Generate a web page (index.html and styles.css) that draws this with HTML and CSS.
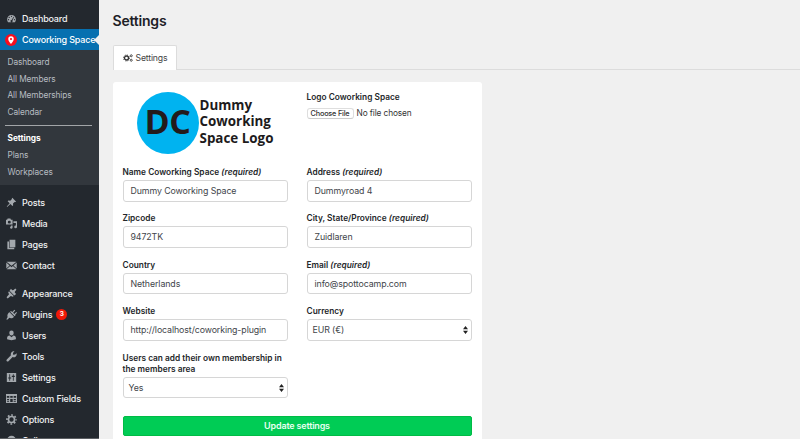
FILE: index.html
```html
<!DOCTYPE html>
<html lang="en">
<head>
<meta charset="utf-8">
<title>Settings</title>
<link rel="stylesheet" href="styles.css">
</head>
<body>
<div class="app">
<nav class="sidebar">
  <a class="item"><svg viewBox="0 0 20 20"><path fill-rule="evenodd" d="M3.800 17h12.400c1.100-1.500 1.800-3.400 1.800-5.400A8 8 0 0 0 2 11.600c0 2 .7 3.900 1.800 5.400zM10 5a1 1 0 1 1 0 2.200A1 1 0 0 1 10 5zM5.800 7a1 1 0 1 1 0 2.200A1 1 0 0 1 5.800 7zm8 0 1 .4-3 6a2 2 0 1 1-1.500-.8zM4.600 11a1 1 0 1 1 0 2.200 1 1 0 0 1 0-2.200zm10.800 0a1 1 0 1 1 0 2.200 1 1 0 0 1 0-2.200z"/></svg><span>Dashboard</span></a>
  <a class="item current"><svg class="pin" viewBox="0 0 24 24"><circle cx="12" cy="12" r="12" fill="#f80d1d"/><path fill="#fff" fill-rule="evenodd" d="M12 4.500a5.500 5.500 0 0 0-5.500 5.500c0 4 5.500 10 5.500 10s5.500-6 5.500-10A5.500 5.500 0 0 0 12 4.500zm0 3.300a2.200 2.200 0 1 1 0 4.400 2.200 2.200 0 0 1 0-4.400z"/></svg><span>Coworking Space</span></a>
  <div class="submenu">
    <a>Dashboard</a><a>All Members</a><a>All Memberships</a><a>Calendar</a>
    <hr>
    <a class="active">Settings</a><a>Plans</a><a>Workplaces</a>
  </div>
  <div class="group">
  <a class="item"><svg viewBox="0 0 20 20"><path d="M11.500 1.500 18.500 8.500l-1.600.7-1.200-.3-3 3 .3 3.300-1.300 1.300-3.600-3.600L2 18l-.6-.6 5.300-6L3 7.700l1.300-1.300 3.500.4 3-3-.2-1.200z"/></svg><span>Posts</span></a>
  <a class="item"><svg viewBox="0 0 20 20"><path fill-rule="evenodd" d="M0 3h2l1-2h5l1 2h3v9H0zm6 1.800a2.700 2.700 0 1 0 0 5.400 2.700 2.700 0 0 0 0-5.400zM13.500 6H20v10a2.500 2.500 0 1 1-2-2.400V9h-4.500zM9 13.500h3V17a2.300 2.300 0 1 1-3-2z"/></svg><span>Media</span></a>
  <a class="item"><svg viewBox="0 0 20 20"><path d="M6.500 1.500H17V15H6.500zM2.500 4.500h3V16H15v2.500H2.500z"/></svg><span>Pages</span></a>
  <a class="item"><svg viewBox="0 0 20 20"><path d="M1 3h18l-9 7.500zM.5 4.500l6 5.500-6 5.500zm19 0v11l-6-5.500zM7.500 11 10 13l2.500-2 6.500 6H1z"/></svg><span>Contact</span></a>
  </div>
  <div class="group">
  <a class="item"><svg viewBox="0 0 20 20"><path d="M9 1.500 11.500 4l2.200-.3L17 1l2 2-2.700 3.500-.3 2L18.500 11 15 13.500 6.500 5zM5.500 6l8.500 8.500-1.500 1.500-3.800-1.500L3 19l-2-2 4.500-5.500L4 7.500z"/></svg><span>Appearance</span></a>
  <a class="item"><svg viewBox="0 0 20 20"><path d="m11.500 5.500 3.700-4.200 1.600 1.500L13 7l2 2 3.700-3.700 1.500 1.500-3.700 4 .8 1-1.500 1.500L7.500 5 9 3.500zM6.500 6l8 8c-2 3-6 3.500-8.500 2L3 19H.5L3 14.500C1.500 11.500 3.500 7.500 6.500 6z"/></svg><span>Plugins</span><b class="badge">3</b></a>
  <a class="item"><svg viewBox="0 0 20 20"><path d="M10 1a4 4 0 0 1 4 4c0 2.500-1.500 5-4 5S6 7.500 6 5a4 4 0 0 1 4-4zm-3.500 9 3.500 3 3.500-3c2.800.5 4.500 2 4.500 4.500V17c-2 1-5 1.500-8 1.500S4 18 2 17v-2.500C2 12 3.700 10.500 6.500 10z"/></svg><span>Users</span></a>
  <a class="item"><svg viewBox="0 0 20 20"><path d="M16.700 6.300 13.500 7l-1-1 .7-3.200L15.500.8A5.300 5.300 0 0 0 9 7.700L1.500 15.500a2 2 0 0 0 3 3L12 11a5.300 5.300 0 0 0 7-6.800z"/></svg><span>Tools</span></a>
  <a class="item"><svg viewBox="0 0 20 20"><path fill-rule="evenodd" d="M1.500 2h17v16h-17zM6 4v6H4v2h2v4h1.500v-4h2v-2h-2V4zm6.500 0v3h-2v2h2v7H14V9h2V7h-2V4z"/></svg><span>Settings</span></a>
  <a class="item"><svg viewBox="0 0 20 20"><path fill-rule="evenodd" d="M0 2h20v16H0zM1.500 5.500v3h4.500v-3zm6.200 0v3h4.500v-3zm6.200 0v3h4.500v-3zM2 11v2h3.500v-2zm0 4v1.500h3.500V15zm5.700-4v5.500h4.500V11zm6.200 0v2h4v-2zm0 4v1.500h4V15z"/></svg><span>Custom Fields</span></a>
  <a class="item"><svg viewBox="0 0 20 20"><g fill="none" stroke="#a3a8ad"><circle cx="10" cy="10" r="5.500" stroke-width="3"/><circle cx="10" cy="10" r="8.200" stroke-width="3" stroke-dasharray="3.220 3.220" stroke-dashoffset="1.610"/></g></svg><span>Options</span></a>
  <a class="item"><svg viewBox="0 0 20 20"><circle cx="10" cy="10" r="8.500"/></svg><span>Gallery</span></a>
  </div>
</nav>
<main>
  <h1>Settings</h1>
  <div class="tabs"><a class="tab"><svg viewBox="0 0 20 16" fill="none" stroke="#333"><circle cx="7" cy="8" r="4" stroke-width="2.600"/><circle cx="7" cy="8" r="6" stroke-width="1.800" stroke-dasharray="2.400 2.300"/><circle cx="16.500" cy="3.500" r="2" stroke-width="1.700"/><circle cx="16.500" cy="12.500" r="2" stroke-width="1.700"/></svg><span>Settings</span></a></div>
  <form class="card">
    <div class="logo"><div class="disc">DC</div><div class="logo-name">Dummy<br>Coworking<br>Space Logo</div></div>
    <div class="upload"><label>Logo Coworking Space</label><div class="file"><span class="choose">Choose File</span><span class="nofile">No file chosen</span></div></div>
    <div class="field"><label>Name Coworking Space <i>(required)</i></label><div class="input">Dummy Coworking Space</div></div>
    <div class="field"><label>Address <i>(required)</i></label><div class="input">Dummyroad 4</div></div>
    <div class="field"><label>Zipcode</label><div class="input">9472TK</div></div>
    <div class="field"><label>City, State/Province <i>(required)</i></label><div class="input">Zuidlaren</div></div>
    <div class="field"><label>Country</label><div class="input">Netherlands</div></div>
    <div class="field"><label>Email <i>(required)</i></label><div class="input">info@spottocamp.com</div></div>
    <div class="field"><label>Website</label><div class="input">http://localhost/coworking-plugin</div></div>
    <div class="field"><label>Currency</label><div class="input select">EUR (€)<svg viewBox="0 0 5 8"><path d="M0 3.200 2.500 0 5 3.200zM0 4.800 2.500 8 5 4.800z"/></svg></div></div>
    <div class="field tall"><label>Users can add their own membership in<br>the members area</label><div class="input select">Yes<svg viewBox="0 0 5 8"><path d="M0 3.200 2.500 0 5 3.200zM0 4.800 2.500 8 5 4.800z"/></svg></div></div>
    <div class="submit">Update settings</div>
  </form>
</main>
</div>
</body>
</html>
```
FILE: styles.css
```css
* { box-sizing: border-box; }
body { margin: 0; background: #f0f0f0; font-family: Inter, "Liberation Sans", sans-serif; color: #333; overflow: hidden; }
.app { display: flex; width: 800px; height: 439px; overflow: hidden; }
.sidebar { width: 99px; height: 439px; flex: none; background: #23282e; padding-top: 8px; overflow: hidden; border-bottom: 1px solid #5c5f63; }
.item { display: flex; align-items: center; height: 21px; padding-left: 6px; color: #f0f1f2; font-size: 9px; font-weight: 500; letter-spacing: -.18px; white-space: nowrap; position: relative; }
.item svg { width: 11px; height: 11px; margin-right: 5px; fill: #a3a8ad; flex: none; }
.item .pin { width: 12px; height: 12px; margin: 0 5px 0 -1px; }
.current { background: #0670b0; color: #fff; }
.current::after { content: ""; position: absolute; right: 0; top: 5.500px; border: 5px solid transparent; border-right-color: #f0f0f0; border-left: 0; }
.submenu { height: 135px; background: #32373d; padding: 4px 7.500px 0; }
.submenu a { display: block; height: 16.700px; line-height: 17.200px; font-size: 8.300px; letter-spacing: -.1px; color: #b8bdc2; }
.submenu hr { border: 0; height: 1px; background: #a2a5a8; margin: 4px 0 4.500px -3px; }
.submenu .active { color: #fff; font-weight: 700; letter-spacing: -.05px; }
.group { padding-top: 7px; }
.badge { width: 11px; height: 11px; border-radius: 50%; background: #f01808; color: #fff; font-size: 6.500px; line-height: 11px; text-align: center; letter-spacing: 0; margin-left: 4px; }
main { flex: 1; min-width: 0; padding-left: 13.500px; }
h1 { margin: 0; padding-top: 12px; height: 45px; font-size: 14px; line-height: 18px; font-weight: 600; letter-spacing: -.2px; color: #1d2126; }
.tabs { height: 25px; border-bottom: 1px solid #dcdcdc; }
.tab { display: flex; align-items: center; width: 64px; height: 25px; background: #fff; border: 1px solid #dcdcdc; border-bottom: 0; border-radius: 2px 2px 0 0; font-size: 8.700px; letter-spacing: -.18px; padding-left: 9px; color: #444; }
.tab svg { width: 10px; height: 8px; margin-right: 3px; }
.card { width: 369px; height: 370px; margin-top: 12px; padding: 10px 10px 0; background: #fff; border-radius: 3px; display: grid; grid-template-columns: 165px 165px; column-gap: 19px; grid-template-rows: 74px repeat(4, 46.400px) 64px 20px; }
.logo { display: flex; padding-left: 14px; }
.disc { width: 62px; height: 62px; flex: none; border-radius: 50%; background: #00b3f0; color: #231a1c; font: 700 34px/59px "Open Sans", sans-serif; letter-spacing: -.3px; text-align: center; }
.logo-name { font: 700 13.400px/16.300px "Open Sans", sans-serif; color: #1d1b1c; padding-top: 5px; margin-left: 1px; white-space: nowrap; }
label { display: block; font-size: 8.300px; line-height: 11px; height: 11px; padding-top: 1px; font-weight: 600; letter-spacing: .02px; color: #24272a; white-space: nowrap; }
.upload label { height: 16px; padding-top: 0; }
.file { display: flex; align-items: center; font-size: 8.300px; }
.nofile { letter-spacing: -.1px; margin-top: -1px; }
.choose { width: 47px; height: 11px; border: 1px solid #dedede; border-bottom-color: #ccc; border-radius: 3px; font-size: 7.300px; line-height: 9px; text-align: center; letter-spacing: -.2px; margin-right: 3px; font-weight: 500; }
.input { height: 21.500px; border: 1px solid #d6d6d6; border-radius: 3px; margin-top: 3px; padding-left: 7px; font-size: 8.800px; letter-spacing: -.09px; line-height: 20px; color: #42454a; position: relative; white-space: nowrap; }
.select { padding-left: 5px; }
.select svg { position: absolute; right: 3px; top: 6px; width: 5px; height: 8px; fill: #222; }
.tall label { height: 22px; }
.submit { grid-column: 1 / 3; background: #00cc55; border: 1px solid #00bb45; border-radius: 2px; color: #e7fff0; text-align: center; font-size: 9px; font-weight: 600; letter-spacing: -.18px; line-height: 18px; }
```
